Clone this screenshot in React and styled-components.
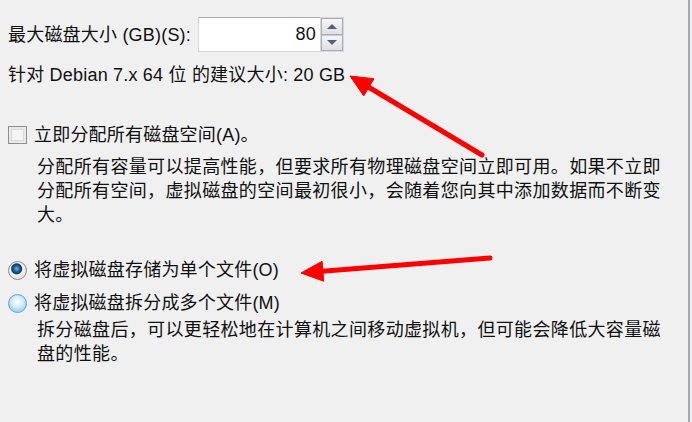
import React from 'react';
import styled, { createGlobalStyle } from 'styled-components';

const GlobalStyle = createGlobalStyle`
  html, body {
    margin: 0;
    padding: 0;
    background: #f0f0f0;
  }
`;

const Page = styled.div`
  position: relative;
  box-sizing: border-box;
  width: 690px;
  height: 422px;
  padding: 17px 0 0 8px;
  background: #f0f0f0;
  border-right: 2px solid #9ea9b6;
  font-family: "Liberation Sans", "Noto Sans CJK SC", sans-serif;
  font-size: 18px;
  letter-spacing: 0.2px;
  color: #111;
  overflow: hidden;
`;

const SizeRow = styled.div`
  display: flex;
  align-items: center;
  gap: 7px;
  height: 35px;
`;

const Label = styled.span`
  line-height: 24px;
  white-space: nowrap;
`;

const Spin = styled.div`
  display: flex;
  height: 35px;
`;

const NumberBox = styled.div`
  box-sizing: border-box;
  width: 122px;
  height: 35px;
  padding-right: 4px;
  background: #fff;
  border: 1px solid #d5d8de;
  border-top-color: #abadb3;
  border-right: none;
  text-align: right;
  line-height: 33px;
`;

const SpinButtons = styled.div`
  display: flex;
  flex-direction: column;
  width: 24px;
  border: 1px solid #d5d8de;
  box-sizing: border-box;
`;

const SpinBtn = styled.div`
  flex: 1;
  display: flex;
  align-items: center;
  justify-content: center;
  background: linear-gradient(#f6f6f6, #e0e0e0);
  border: 1px solid #a9aeb5;
  border-top-color: ${p => (p.$down ? '#c6c9ce' : '#a9aeb5')};
  &::after {
    content: '';
    border-left: 5px solid transparent;
    border-right: 5px solid transparent;
    ${p => (p.$down ? 'border-top: 5px solid #4b5f8c;' : 'border-bottom: 5px solid #4b5f8c;')}
  }
`;

const Hint = styled.div`
  margin-top: 11px;
  line-height: 24px;
`;

const OptionRow = styled.div`
  display: flex;
  align-items: center;
  gap: 7px;
  height: 24px;
  margin-top: ${p => p.$gap}px;
`;

const CheckBox = styled.span`
  box-sizing: border-box;
  width: 19px;
  height: 18px;
  border: 1px solid #8e8f8f;
  background: #f4f4f4;
  box-shadow: inset 0 0 0 2px #e9e9e9, inset 0 0 0 3px #dadada;
`;

const Radio = styled.span`
  box-sizing: border-box;
  width: 19px;
  height: 19px;
  border-radius: 50%;
  border: 1px solid ${p => (p.$checked ? '#8c8c8c' : '#5ea2da')};
  background: ${p =>
    p.$checked
      ? 'radial-gradient(circle at 45% 40%, #6fb4ec 0, #1f5f9e 3px, #0e3562 5px, #f2f2f2 6px, #e6e6e6 9px)'
      : 'radial-gradient(circle at 50% 40%, #ffffff 0, #d9eefc 5px, #a9d4f3 9px)'};
`;

const Desc = styled.p`
  width: 630px;
  margin: ${p => p.$top}px 0 0 29px;
  line-height: 24px;
  letter-spacing: 0.35px;
`;

const Arrows = styled.svg`
  position: absolute;
  left: 0;
  top: 0;
  pointer-events: none;
`;

function Arrow({ tip, tail }) {
  const dx = tail[0] - tip[0];
  const dy = tail[1] - tip[1];
  const len = Math.hypot(dx, dy);
  const ux = dx / len;
  const uy = dy / len;
  const bx = tip[0] + ux * 22;
  const by = tip[1] + uy * 22;
  const px = -uy * 10;
  const py = ux * 10;
  return (
    <g fill="#ff0000" stroke="#ff0000">
      <line x1={bx - ux * 4} y1={by - uy * 4} x2={tail[0]} y2={tail[1]} strokeWidth="5" strokeLinecap="round" />
      <polygon points={`${tip[0]},${tip[1]} ${bx + px},${by + py} ${bx - px},${by - py}`} strokeWidth="1" strokeLinejoin="round" />
    </g>
  );
}

export default function App() {
  return (
    <Page>
      <GlobalStyle />
      <SizeRow>
        <Label>最大磁盘大小 (GB)(S):</Label>
        <Spin>
          <NumberBox>80</NumberBox>
          <SpinButtons>
            <SpinBtn />
            <SpinBtn $down />
          </SpinButtons>
        </Spin>
      </SizeRow>
      <Hint>针对 Debian 7.x 64 位 的建议大小: 20 GB</Hint>

      <OptionRow $gap={36}>
        <CheckBox />
        <Label>立即分配所有磁盘空间(A)。</Label>
      </OptionRow>
      <Desc $top={8}>
        分配所有容量可以提高性能，但要求所有物理磁盘空间立即可用。如果不立即分配所有空间，虚拟磁盘的空间最初很小，会随着您向其中添加数据而不断变大。
      </Desc>

      <OptionRow $gap={31}>
        <Radio $checked />
        <Label>将虚拟磁盘存储为单个文件(O)</Label>
      </OptionRow>
      <OptionRow $gap={9}>
        <Radio />
        <Label>将虚拟磁盘拆分成多个文件(M)</Label>
      </OptionRow>
      <Desc $top={3}>
        拆分磁盘后，可以更轻松地在计算机之间移动虚拟机，但可能会降低大容量磁盘的性能。
      </Desc>

      <Arrows width="690" height="422">
        <Arrow tip={[350, 76]} tail={[482, 155]} />
        <Arrow tip={[301, 273]} tail={[490, 258]} />
      </Arrows>
    </Page>
  );
}
